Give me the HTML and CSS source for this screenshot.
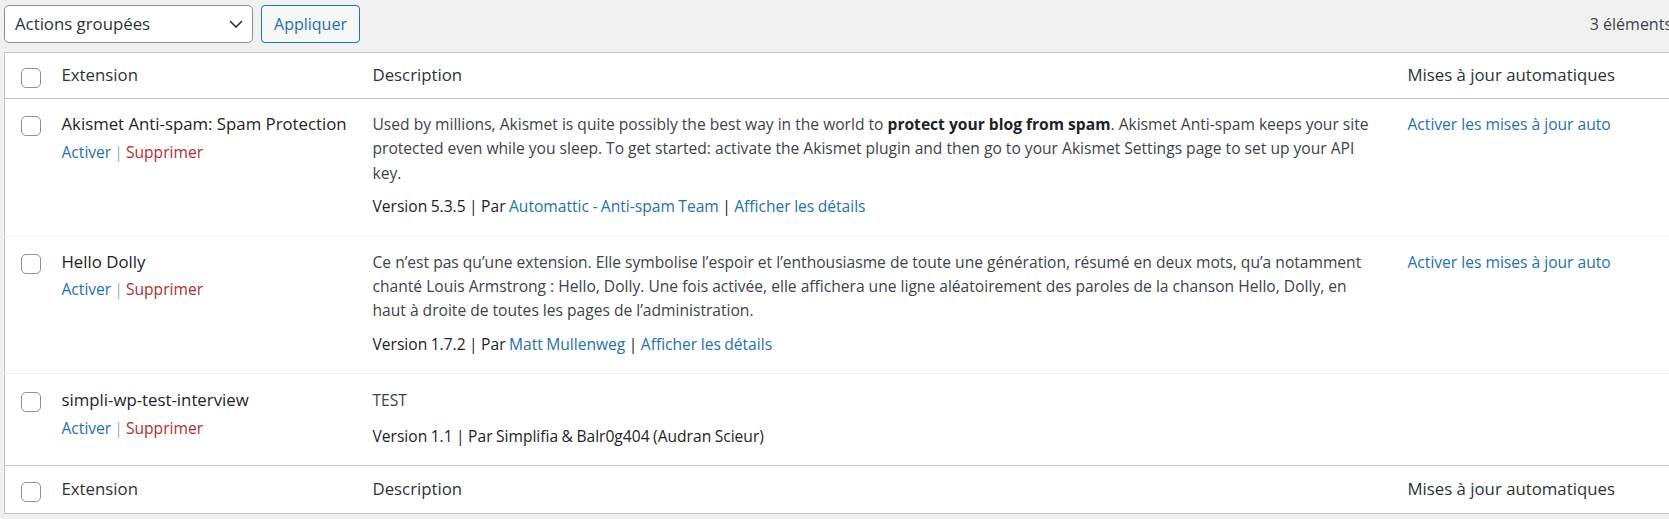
FILE: index.html
```html
<!DOCTYPE html>
<html lang="fr">
<head>
<meta charset="utf-8">
<title>Extensions</title>
<link rel="stylesheet" href="styles.css">
</head>
<body>
<div class="wrap">
  <div class="tablenav">
    <div class="bulk">
      <div class="select">
        <span>Actions groupées</span>
        <svg class="chev" width="14" height="8" viewBox="0 0 14 8"><path d="M1 1l6 6 6-6" fill="none" stroke="#2c3338" stroke-width="1.6"/></svg>
      </div>
      <button class="btn">Appliquer</button>
    </div>
    <div class="count">3 éléments</div>
  </div>
  <table class="plugins">
    <colgroup><col class="c-check"><col class="c-name"><col class="c-desc"><col class="c-auto"></colgroup>
    <thead>
      <tr>
        <th class="check"><span class="cb"></span></th>
        <th>Extension</th>
        <th>Description</th>
        <th>Mises à jour automatiques</th>
      </tr>
    </thead>
    <tbody>
      <tr>
        <td class="check"><span class="cb"></span></td>
        <td class="title">
          <strong>Akismet Anti-spam: Spam Protection</strong>
          <div class="actions"><a class="act">Activer</a> <span class="sep">|</span> <a class="del">Supprimer</a></div>
        </td>
        <td class="desc">
          <p>Used by millions, Akismet is quite possibly the best way in the world to <b>protect your blog from spam</b>. Akismet Anti-spam keeps your site protected even while you sleep. To get started: activate the Akismet plugin and then go to your Akismet Settings page to set up your API key.</p>
          <div class="ver">Version 5.3.5 | Par <a>Automattic - Anti-spam Team</a> | <a>Afficher les détails</a></div>
        </td>
        <td class="auto"><a>Activer les mises à jour auto</a></td>
      </tr>
      <tr>
        <td class="check"><span class="cb"></span></td>
        <td class="title">
          <strong>Hello Dolly</strong>
          <div class="actions"><a class="act">Activer</a> <span class="sep">|</span> <a class="del">Supprimer</a></div>
        </td>
        <td class="desc">
          <p>Ce n’est pas qu’une extension. Elle symbolise l’espoir et l’enthousiasme de toute une génération, résumé en deux mots, qu’a notamment chanté Louis Armstrong : Hello, Dolly. Une fois activée, elle affichera une ligne aléatoirement des paroles de la chanson Hello, Dolly, en haut à droite de toutes les pages de l’administration.</p>
          <div class="ver">Version 1.7.2 | Par <a>Matt Mullenweg</a> | <a>Afficher les détails</a></div>
        </td>
        <td class="auto"><a>Activer les mises à jour auto</a></td>
      </tr>
      <tr class="last">
        <td class="check"><span class="cb"></span></td>
        <td class="title">
          <strong>simpli-wp-test-interview</strong>
          <div class="actions"><a class="act">Activer</a> <span class="sep">|</span> <a class="del">Supprimer</a></div>
        </td>
        <td class="desc">
          <p>TEST</p>
          <div class="ver">Version 1.1 | Par Simplifia &amp; Balr0g404 (Audran Scieur)</div>
        </td>
        <td class="auto"></td>
      </tr>
    </tbody>
    <tfoot>
      <tr>
        <th class="check"><span class="cb"></span></th>
        <th>Extension</th>
        <th>Description</th>
        <th>Mises à jour automatiques</th>
      </tr>
    </tfoot>
  </table>
</div>
</body>
</html>
```
FILE: styles.css
```css
html, body {
  margin: 0;
  padding: 0;
  overflow: hidden;
  background: #f0f0f1;
}
body {
  font-family: "Open Sans", "Noto Sans", sans-serif;
  font-size: 15.6px;
  line-height: 24.4px;
  color: #3c434a;
}
.wrap {
  margin-left: 4px;
  width: 1672px;
}
.tablenav {
  display: flex;
  justify-content: space-between;
  align-items: center;
  padding-top: 5px;
  height: 38px;
  margin-bottom: 9px;
}
.bulk {
  display: flex;
  gap: 8px;
  height: 38px;
}
.select {
  box-sizing: border-box;
  width: 249px;
  height: 38px;
  border: 1px solid #8c8f94;
  border-radius: 5px;
  background: #fff;
  display: flex;
  align-items: center;
  justify-content: space-between;
  padding: 0 9px 0 10px;
  color: #2c3338;
  font-size: 16.8px;
}
.chev { display: block; }
.btn {
  box-sizing: border-box;
  width: 99px;
  height: 38px;
  border: 1px solid #2271b1;
  border-radius: 4px;
  background: #f6f7f7;
  color: #2271b1;
  font: inherit;
  font-size: 16px;
  padding: 0;
}
.count {
  color: #3c434a;
  font-size: 16px;
  margin-right: 4px;
}
table.plugins {
  width: 100%;
  table-layout: fixed;
  border-collapse: collapse;
  background: #fff;
  border: 1px solid #c3c4c7;
}
.c-check { width: 47px; }
.c-name { width: 311px; }
.c-desc { width: 1035px; }
th, td {
  text-align: left;
  vertical-align: top;
  padding: 0 10px;
}
thead th, tfoot th {
  font-weight: normal;
  font-size: 16.8px;
  color: #2c3338;
  padding: 10px 10px 10px;
  height: 24px;
}
tfoot th { padding-top: 11px; padding-bottom: 11px; }
thead tr { border-bottom: 1px solid #c3c4c7; }
tfoot tr { border-top: 1px solid #c3c4c7; }
tbody tr + tr { border-top: 1px solid #f0f0f1; }
tbody td { padding: 13px 10px 7px; }
tbody td.desc { padding-right: 20px; }
tbody tr.last td { padding-top: 14px; }
th.check, td.check {
  padding-left: 16px;
  padding-right: 0;
}
.cb {
  display: block;
  box-sizing: border-box;
  width: 20px;
  height: 20px;
  border: 1px solid #8c8f94;
  border-radius: 5px;
  background: #fff;
}
th.check .cb { margin-top: 5px; }
td.check .cb { margin-top: 4px; }
.title strong {
  display: block;
  font-weight: normal;
  font-size: 16.8px;
  line-height: 24.5px;
  color: #1d2327;
  margin-bottom: 3px;
  white-space: nowrap;
}
a { color: #2271b1; text-decoration: none; }
.actions { word-spacing: -1px; }
.actions a.del { color: #b32d2e; }
.actions .sep { color: #a7aaad; }
.desc p { margin: 0 0 9px; }
.last .desc p { margin-bottom: 11px; }
.desc b { color: #1d2327; }
.ver { color: #1d2327; margin-bottom: 10px; word-spacing: -0.6px; }
.auto a { white-space: nowrap; }
```
